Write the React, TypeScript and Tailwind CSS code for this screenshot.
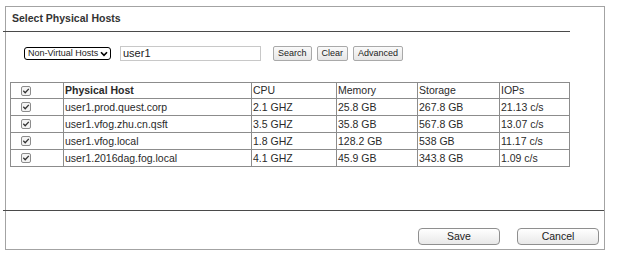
import React from "react";

type HostRow = {
  host: string;
  cpu: string;
  memory: string;
  storage: string;
  iops: string;
};

const rows: HostRow[] = [
  { host: "user1.prod.quest.corp", cpu: "2.1 GHZ", memory: "25.8 GB", storage: "267.8 GB", iops: "21.13 c/s" },
  { host: "user1.vfog.zhu.cn.qsft", cpu: "3.5 GHZ", memory: "35.8 GB", storage: "567.8 GB", iops: "13.07 c/s" },
  { host: "user1.vfog.local", cpu: "1.8 GHZ", memory: "128.2 GB", storage: "538 GB", iops: "11.17 c/s" },
  { host: "user1.2016dag.fog.local", cpu: "4.1 GHZ", memory: "45.9 GB", storage: "343.8 GB", iops: "1.09 c/s" },
];

const CheckBox = () => (
  <svg width="10" height="10" viewBox="0 0 10 10" className="block">
    <rect x="0.5" y="0.5" width="9" height="9" rx="1.5" fill="#f4f4f4" stroke="#8c8c8c" />
    <path d="M2.3 4.8 L4.2 6.7 L7.8 2.9" fill="none" stroke="#333" strokeWidth="1.3" />
  </svg>
);

const SmallButton: React.FC<{ label: string }> = ({ label }) => (
  <button className="h-[15px] px-[4px] border border-[#a9a9a9] rounded-[2px] bg-gradient-to-b from-[#fafafa] to-[#e6e6e6] text-[9px] leading-none text-[#222]">
    {label}
  </button>
);

const DialogButton: React.FC<{ label: string }> = ({ label }) => (
  <button className="w-[82px] h-[17px] border border-[#8f8f8f] rounded-[4px] bg-gradient-to-b from-[#ffffff] to-[#e8e8e8] text-[10.5px] leading-none text-[#222]">
    {label}
  </button>
);

export default function App() {
  const cell = "border border-[#8c8c8c] pl-[1px] text-left align-middle";

  return (
    <div className="w-[640px] h-[255px] bg-white pt-[6px] pl-[5px] font-['Liberation_Sans',Arial,sans-serif] text-[#222]">
      <div className="w-[600px] h-[244px] border border-[#a3a3a3] flex flex-col">
        <div className="h-[24px] flex items-center pl-[6px] text-[10.5px] font-bold text-[#333]">
          Select Physical Hosts
        </div>
        <div className="-ml-[3px] w-[567px] border-t border-[#4a4a4a]" />

        <div className="flex items-center mt-[14px] pl-[18px] h-[15px]">
          <div className="w-[87px] h-[13px] border-[1.5px] border-black rounded-[3px] flex items-center justify-between pl-[3px] pr-[2px] text-[9px] leading-none">
            <span>Non-Virtual Hosts</span>
            <svg width="8" height="6" viewBox="0 0 8 6">
              <path d="M1 1.2 L4 4.3 L7 1.2" fill="none" stroke="#000" strokeWidth="1.6" />
            </svg>
          </div>
          <div className="ml-[9px] w-[141px] h-[15px] border border-[#c8c8c8] flex items-center pl-[2px] text-[11px] leading-none">
            user1
          </div>
          <div className="ml-[12px] flex gap-[5px]">
            <SmallButton label="Search" />
            <SmallButton label="Clear" />
            <SmallButton label="Advanced" />
          </div>
        </div>

        <div className="mt-[21px] pl-[4px]">
          <table className="border-collapse w-[559px] table-fixed text-[10.5px] leading-none text-[#2a2a2a]">
            <colgroup>
              <col className="w-[53px]" />
              <col className="w-[188px]" />
              <col className="w-[85px]" />
              <col className="w-[81px]" />
              <col className="w-[82px]" />
              <col className="w-[70px]" />
            </colgroup>
            <thead>
              <tr className="h-[16px]">
                <th className={`${cell} pl-[10px]`}>
                  <CheckBox />
                </th>
                <th className={`${cell} font-bold`}>Physical Host</th>
                <th className={`${cell} font-normal`}>CPU</th>
                <th className={`${cell} font-normal`}>Memory</th>
                <th className={`${cell} font-normal`}>Storage</th>
                <th className={`${cell} font-normal`}>IOPs</th>
              </tr>
            </thead>
            <tbody>
              {rows.map((r) => (
                <tr key={r.host} className="h-[17px]">
                  <td className={`${cell} pl-[10px]`}>
                    <CheckBox />
                  </td>
                  <td className={cell}>{r.host}</td>
                  <td className={cell}>{r.cpu}</td>
                  <td className={cell}>{r.memory}</td>
                  <td className={cell}>{r.storage}</td>
                  <td className={cell}>{r.iops}</td>
                </tr>
              ))}
            </tbody>
          </table>
        </div>

        <div className="mt-auto -ml-[3px] w-[601px] border-t border-[#4a4a4a]" />
        <div className="h-[38px] flex items-start justify-end gap-[17px] pt-[17px] pr-[5px]">
          <DialogButton label="Save" />
          <DialogButton label="Cancel" />
        </div>
      </div>
    </div>
  );
}
